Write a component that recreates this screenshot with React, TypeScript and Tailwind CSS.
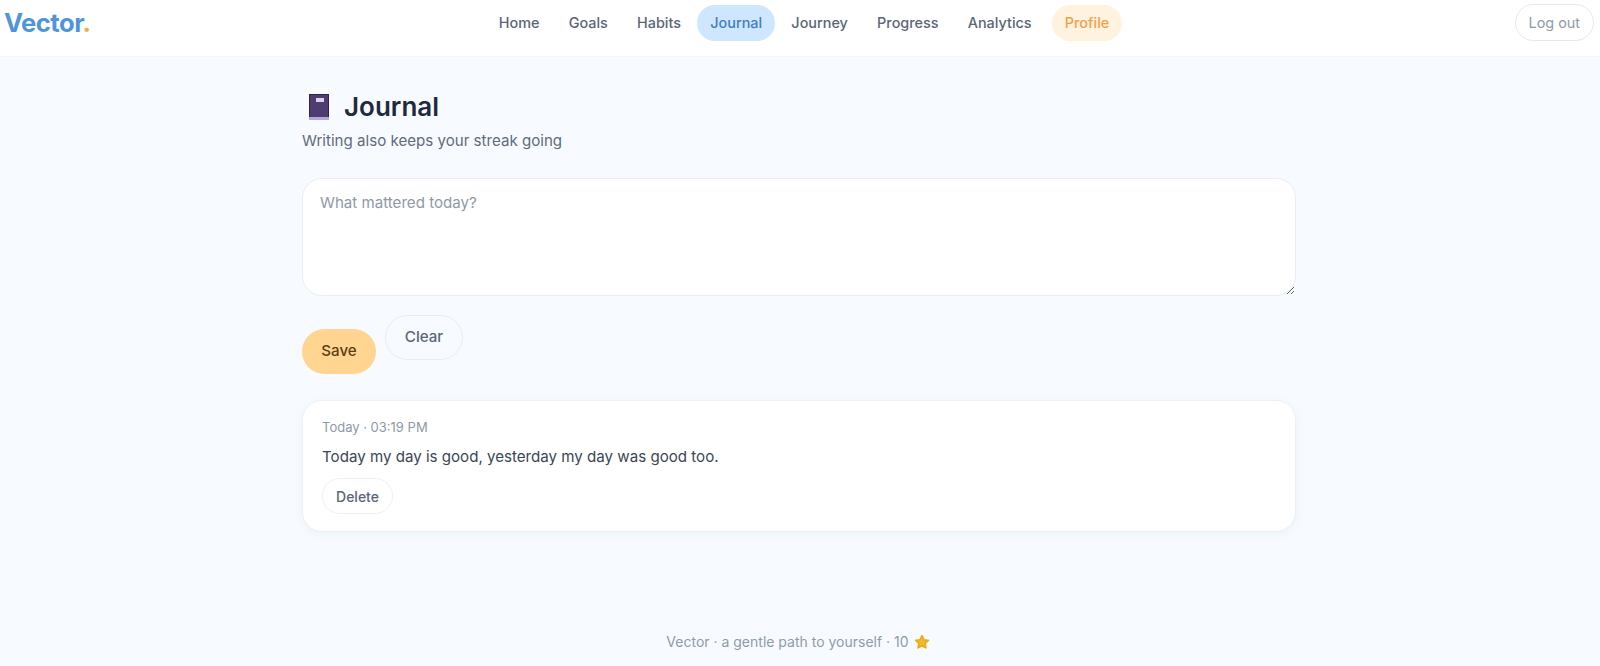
const navLinks = ["Home", "Goals", "Habits", "Journal", "Journey", "Progress", "Analytics", "Profile"]

const navClass = (link: string) => {
  if (link === "Journal") return "bg-[#cfe6ff] text-[#3f7fbf]"
  if (link === "Profile") return "ml-[4px] bg-[#fff3e0] text-[#f0a24a]"
  return "text-[#5a6678]"
}

const BookIcon = () => (
  <svg viewBox="0 0 20 26" className="h-[26px] w-[20px]">
    <rect x="0" y="0" width="20" height="26" fill="#2f2450" />
    <rect x="1" y="1" width="18" height="22" fill="#4f3d72" />
    <rect x="7" y="4" width="8" height="4" fill="#d9d2e8" />
    <rect x="0" y="23" width="20" height="3" fill="#b8a5dc" />
  </svg>
)

const StarIcon = () => (
  <svg viewBox="0 0 24 24" className="h-[16px] w-[16px]">
    <path
      d="M12 2.5l2.9 6.2 6.6.8-4.9 4.6 1.3 6.7-5.9-3.3-5.9 3.3 1.3-6.7-4.9-4.6 6.6-.8z"
      fill="#f2b92a"
      stroke="#e9ac1c"
      strokeWidth="2.5"
      strokeLinejoin="round"
    />
  </svg>
)

export default function App() {
  return (
    <div className="flex min-h-screen flex-col bg-[#f7fbff] font-['Inter',sans-serif]">
      {/* Top bar */}
      <header className="flex h-[57px] items-start justify-between border-b border-[#f1f5f9] bg-white pl-[4px] pr-[6px] pt-[4px]">
        <div className="text-[25.6px] font-bold leading-[38px] tracking-[-0.5px] text-[#4f96d8]">
          Vector<span className="text-[#f5a94b]">.</span>
        </div>
        <nav className="ml-[3px] mt-[1px] flex items-center gap-[3.25px]">
          {navLinks.map((link) => (
            <a
              key={link}
              className={`flex h-[36px] items-center rounded-full px-[13px] text-[14.4px] font-medium ${navClass(link)}`}
            >
              {link}
            </a>
          ))}
        </nav>
        <button className="h-[37px] rounded-full border border-[#e5e9ef] bg-white px-[13px] text-[14.4px] text-[#8f99a8]">
          Log out
        </button>
      </header>

      <main className="ml-[302px] w-[994px] pt-[31px]">
        <h1 className="flex items-center text-[26px] font-semibold leading-[38px] text-[#1f2a3c]">
          <span className="ml-[7px] mr-[15px]">
            <BookIcon />
          </span>
          Journal
        </h1>
        <p className="mt-[3px] text-[15.12px] leading-[23px] text-[#5f6b7d]">Writing also keeps your streak going</p>

        <textarea
          placeholder="What mattered today?"
          className="mt-[26px] block h-[118px] w-full rounded-[20px] border border-[#e8eef4] bg-white px-[17px] py-[14px] text-[15.12px] leading-[20px] text-[#1f2a3c] outline-none placeholder:text-[#8f99a8]"
        />

        <div className="mt-[19px] flex items-start gap-[9px]">
          <button className="mt-[14px] h-[45px] w-[74px] rounded-full bg-[#ffd591] text-[15.12px] font-medium text-[#5c3d0e]">
            Save
          </button>
          <button className="h-[45px] w-[78px] rounded-full border border-[#e8edf3] bg-[#f7fbff] text-[15.12px] font-medium text-[#5a6678]">
            Clear
          </button>
        </div>

        <section className="mt-[26px] rounded-[20px] border border-[#edf1f6] bg-white px-[19px] pb-[17px] pt-[16px] shadow-[0_2px_8px_rgba(100,130,170,0.08)]">
          <div className="text-[13px] leading-[20px] text-[#8f99a8]">Today · 03:19 PM</div>
          <p className="mt-[8px] text-[15.12px] leading-[24px] text-[#3b4656]">
            Today my day is good, yesterday my day was good too.
          </p>
          <button className="mt-[9px] block h-[36px] w-[71px] rounded-full border border-[#edf0f4] bg-white text-[14px] font-medium text-[#5a6678]">
            Delete
          </button>
        </section>
      </main>

      <footer className="mt-auto flex items-center justify-center gap-[5px] pb-[14px] pr-[4px] text-[14px] leading-[20px] text-[#8f9bab]">
        <span>Vector · a gentle path to yourself · 10</span>
        <StarIcon />
      </footer>
    </div>
  )
}
